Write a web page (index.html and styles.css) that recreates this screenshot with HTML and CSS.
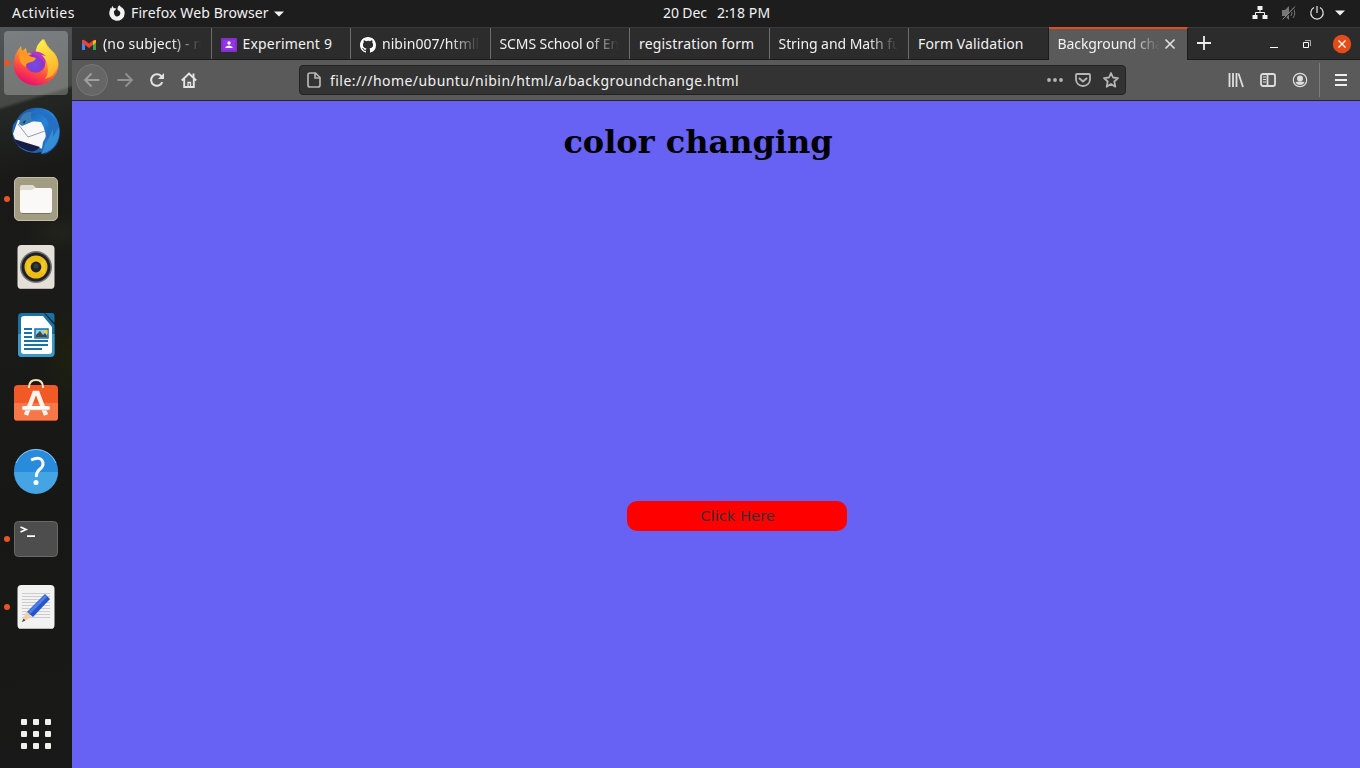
FILE: index.html
```html
<!DOCTYPE html>
<html lang="en">
<head>
<meta charset="utf-8">
<title>Background change</title>
<link rel="stylesheet" href="styles.css">
</head>
<body>
<header class="topbar">
  <div class="top-left">
    <span class="activities">Activities</span>
    <svg class="app-glyph" width="16" height="16" viewBox="0 0 16 16"><path d="M3.300.8 4.600 3 7.300 3.400 6 5.400 4.900 6.100 5.100 8.300A3.100 3.100 0 1 0 10.300 6L8.600 4.900Q8 2 10.300.3L12 2.100Q15.800 4.100 15.700 8.200A7.700 7.700 0 1 1 1.200 4.500L1.500 2.800 2.400 3.400Z" fill="#f2f2f2"/></svg>
    <span class="app-name">Firefox Web Browser</span>
    <svg class="caret" width="10" height="6" viewBox="0 0 10 6"><path d="M0 .5h10L5 5.5z" fill="#f2f2f2"/></svg>
  </div>
  <div class="clock"><span class="date">20 Dec</span><span>2:18 PM</span></div>
  <div class="status">
    <svg width="16" height="16" viewBox="0 0 16 16" fill="#f2f2f2"><path d="M5.500 1h5v4h-5zM.5 10h5v4h-5zM10.500 10h5v4h-5z"/><path d="M8 5v2.500M3.500 10V7.500h9V10" fill="none" stroke="#f2f2f2"/></svg>
    <svg width="16" height="16" viewBox="0 0 16 16" fill="none" stroke="#777"><path d="M1 5h3l4-4v14l-4-4H1z" fill="#777" stroke="none"/><path d="M10 5q2 3 0 6M12 3q3.500 5 0 10"/><path d="M2.500 14.800 15 1.800" stroke="#1d1d1d"/><path d="M1.500 14.500 14 1.500" stroke="#8a8a8a"/></svg>
    <svg width="16" height="16" viewBox="0 0 16 16" fill="none" stroke="#e8e8e8" stroke-width="1.200"><path d="M5 2.500A6.200 6.200 0 1 0 11 2.500M8 1v7"/></svg>
    <svg class="caret" width="10" height="6" viewBox="0 0 10 6"><path d="M0 .5h10L5 5.500z" fill="#f2f2f2"/></svg>
  </div>
</header>
<div class="desktop">
  <nav class="dock">
    <div class="dock-item running focused">
      <svg width="64" height="64" viewBox="0 0 64 64">
        <defs>
          <linearGradient id="fx" x1=".8" y1="0" x2=".35" y2="1"><stop offset="0" stop-color="#ffe636"/><stop offset=".4" stop-color="#ffa52b"/><stop offset=".7" stop-color="#ff503d"/><stop offset="1" stop-color="#e90b74"/></linearGradient>
          <linearGradient id="fy" x1="0" y1="0" x2=".3" y2="1"><stop offset="0" stop-color="#fff44f"/><stop offset="1" stop-color="#ffb12b"/></linearGradient>
          <radialGradient id="fp" cx=".45" cy=".6"><stop offset="0" stop-color="#6c50e8"/><stop offset="1" stop-color="#9331c8"/></radialGradient>
        </defs>
        <path d="M17 15 18 20 22 17 23 22 31 21 40 8Q43 15 47 19Q54 24 54.500 33A22.500 21.500 0 0 1 9.500 33Q9.500 24 17 15Z" fill="url(#fx)"/>
        <path d="M39 8Q42 16 47 19Q53 25 54 34Q51 46 41 48Q47 40 41 27L32 20Q32 14 39 8Z" fill="url(#fy)"/>
        <circle cx="31.500" cy="32" r="9.800" fill="url(#fp)"/>
        <path d="M25 22Q33 18 42 25L37 24Q43 29 41 33Q36 24 25 22Z" fill="#b833c6"/>
        <path d="M16 20Q22 25 32 27Q31 30 27 31Q21 32 22 36Q13 32 16 20Z" fill="#ff9a24"/>
      </svg>
    </div>
    <div class="dock-item">
      <svg width="64" height="64" viewBox="0 -1 64 64">
        <defs><linearGradient id="tb" x1="0" y1="0" x2="1" y2="1"><stop offset="0" stop-color="#174b96"/><stop offset=".5" stop-color="#2785dc"/><stop offset="1" stop-color="#153a80"/></linearGradient></defs>
        <path d="M16 15Q24 6 37 8Q54 11 56 31Q56 49 39 55L44 50Q28 57 15 47Q6 37 9 25Z" fill="url(#tb)"/>
        <path d="M14 20 37 22Q43 31 42 46L39 49 12 41 9 34Z" fill="#f8f8fa"/>
        <path d="M14 24 24 37 41 31" fill="none" stroke="#949ca7"/>
        <path d="M15 24Q17 11 28 12Q25 19 30 21L18 26Z" fill="#3a7db4"/><path d="M27 13Q43 12 45 26Q43 36 39 42L37 54Q57 48 55 29Q51 13 36 10Q30 9 27 13Z" fill="#2470c4"/>
        <path d="M38 54 43 37 42 44 49 29 49 37 55 27Q57 48 38 54Z" fill="#348dd5"/><path d="m19 22 3-2-2 4z" fill="#172333"/><path d="M10 39 36 47Q30 54 22 50Q13 47 10 39Z" fill="#171d44"/>
      </svg>
    </div>
    <div class="dock-item running">
      <svg width="64" height="64" viewBox="0 0 64 64"><rect x="10.500" y="10.500" width="43" height="43" rx="4.500" fill="#a29c83" stroke="#c3bea8"/><path d="M16 29V20q0-2 2-2h11l3 3h13q3 0 3 3v8H16z" fill="#dfdccf"/><path d="M16 24q0-1 2-1h10l3-2h15q2 0 2 2v20q0 3-3 3H19q-3 0-3-3z" fill="#faf9f7"/><path d="M18 46.500h28" stroke="#77715f"/></svg>
    </div>
    <div class="dock-item">
      <svg width="64" height="64" viewBox="0 0 64 64"><rect x="13.500" y="10" width="37" height="44" rx="4" fill="#e4e0d8"/><path d="M16 53.500h32" stroke="#bbb7af"/><circle cx="32" cy="32" r="16" fill="#777"/><circle cx="32" cy="32" r="14.500" fill="#20202b"/><circle cx="32" cy="32" r="11.500" fill="#edbd16"/><path d="m32 32-9-7v14zM32 32l9-7v14z" fill="#ffe04a" opacity=".35"/><circle cx="32" cy="32" r="5.400" fill="#20242a"/><circle cx="32" cy="31" r="2.500" fill="#353c44"/></svg>
    </div>
    <div class="dock-item">
      <svg width="64" height="64" viewBox="0 0 64 64"><path d="M18 10h22l10.500 12v28q0 4-4 4h-29q-3.500 0-3.500-4V14q0-4 4-4z" fill="#1872a5"/><path d="M14 31h36.500v19q0 4-4 4h-29q-3.500 0-3.500-4z" fill="#3999c7"/><path d="M41 10h7q2.500 0 2.500 3v7z" fill="#1872a5"/><path d="M20 13h19l9 11v24q0 3-3 3H20q-3 0-3-3V16q0-3 3-3z" fill="#fff"/><path d="M20 26h8M20 30h8M20 34h8M20 38h24M20 42h24M20 46h18" stroke="#1972a5" stroke-width="2"/><path d="M31 26h13v9H31z" fill="#8bd0ef" stroke="#1972a5" stroke-width="1.500"/><path d="M40 27h3.500v4q-3 0-3.500-4z" fill="#ffd020"/><path d="m32 34v-2l4-4 3 4 2-2 2 3v1z" fill="#444"/></svg>
    </div>
    <div class="dock-item">
      <svg width="64" height="64" viewBox="0 0 64 64"><rect x="10" y="14" width="44" height="36" rx="4" fill="#f15a27"/><path d="M10 32h44v14q0 4-4 4H14q-4 0-4-4z" fill="#f67849"/><path d="M12 49.500h40" stroke="#c84b23"/><path d="M25 17V15.500Q25.500 9 32 9t7 6.500V17" fill="none" stroke="#f3e5bb" stroke-width="2"/><path d="M22 44 30.500 22h3L42 44" fill="none" stroke="#fff4ed" stroke-width="4.500"/><path d="M20 37h24" stroke="#fff" stroke-width="4" stroke-linecap="round"/><path d="M20 39h24" stroke="#d9b2a0" stroke-width=".8"/></svg>
    </div>
    <div class="dock-item">
      <svg width="64" height="64" viewBox="0 1 64 64"><circle cx="32" cy="33" r="22" fill="#298bdc"/><path d="M10 34h44A22 22 0 0 1 10 34z" fill="#45a4e3"/><path d="M12 25A21.500 21.500 0 0 1 52 25" fill="none" stroke="#8dc4ed"/><path d="M27 22Q37 17.500 39 24.500Q39.500 28.500 35.500 31.500Q32 34.500 32.500 39" fill="none" stroke="#fff" stroke-width="3"/><circle cx="32" cy="44.500" r="2.500" fill="#fff"/></svg>
    </div>
    <div class="dock-item running">
      <svg width="64" height="64" viewBox="0 0 64 64"><rect x="10.500" y="14.500" width="43" height="35" rx="4" fill="#4d4d4d" stroke="#6a6a6a"/><path d="m16.500 20 5.500 2.500-5.500 2.500M23 29.200h8" fill="none" stroke="#fff" stroke-width="1.700"/></svg>
    </div>
    <div class="dock-item running">
      <svg width="64" height="64" viewBox="0 0 64 64"><rect x="13.500" y="10" width="37" height="44" rx="4" fill="#f2f2f2"/><path d="M15 53.500h34" stroke="#bbb"/><path d="M18 18.500h28M18 21.500h28M18 24.500h28M18 27.500h28M18 30.500h28M18 33.500h28M18 36.500h28M18 39.500h28M18 42.500h28" stroke="#ccc"/><path d="m18 47 4-10 6 5z" fill="#f5cda5"/><path d="m18 47 1.500-3.500 2 2z" fill="#444"/><path d="m23 37 18-18 5 5-17 18z" fill="#2854c8"/><path d="m24 37 17-17 2 2-17 17z" fill="#4980ea"/></svg>
    </div>
    <div class="apps">
      <svg width="32" height="32" viewBox="0 0 32 32" fill="#f0f0ee"><rect x="1" y="1" width="6" height="6" rx="1"/><rect x="13" y="1" width="6" height="6" rx="1"/><rect x="25" y="1" width="6" height="6" rx="1"/><rect x="1" y="13" width="6" height="6" rx="1"/><rect x="13" y="13" width="6" height="6" rx="1"/><rect x="25" y="13" width="6" height="6" rx="1"/><rect x="1" y="25" width="6" height="6" rx="1"/><rect x="13" y="25" width="6" height="6" rx="1"/><rect x="25" y="25" width="6" height="6" rx="1"/></svg>
    </div>
  </nav>
  <div class="browser">
    <div class="tabs">
      <div class="tab"><svg width="16" height="16" viewBox="0 0 16 16"><path d="M1 3v10h3V5z" fill="#4285f4"/><path d="M12 5v8h3V3z" fill="#34a853"/><path d="M12 5v3l3-2.500V3z" fill="#fbbc04"/><path d="M1 3.500v2L8 11l7-5.500v-2Q13.500 2 12 3.500L8 6.500l-4-3Q2 2 1 3.500z" fill="#ea4335"/><path d="m12 4 3-1v2.500L12 8z" fill="#fbbc04"/></svg><span class="label fade mail">(no subject) - n</span></div>
      <div class="tab"><svg width="16" height="16" viewBox="0 0 16 16"><rect y="1" width="16" height="14" rx="1" fill="#8430ce"/><rect x="2" y="3" width="12" height="10" fill="#9334e6"/><circle cx="8" cy="6" r="1.700" fill="#fff"/><path d="M4.500 11V10Q8 7 11.500 10v1z" fill="#fff"/></svg><span class="label exp">Experiment 9</span></div>
      <div class="tab"><svg width="16" height="16" viewBox="0 0 16 16"><path fill="#fff" d="M8 0C3.580 0 0 3.580 0 8c0 3.540 2.290 6.530 5.470 7.590.4.070.55-.17.55-.38 0-.19-.01-.82-.01-1.490-2.010.37-2.530-.49-2.690-.94-.09-.23-.48-.94-.82-1.130-.28-.15-.68-.52-.01-.53.63-.01 1.080.58 1.230.82.72 1.210 1.870.87 2.330.66.070-.52.28-.87.51-1.070-1.780-.2-3.640-.89-3.640-3.950 0-.87.31-1.590.82-2.150-.08-.2-.36-1.020.08-2.120 0 0 .67-.21 2.200.82A7.700 7.700 0 0 1 8 3.860c.68 0 1.360.09 2 .27 1.530-1.040 2.200-.82 2.200-.82.44 1.100.16 1.920.08 2.120.51.56.82 1.270.82 2.150 0 3.070-1.870 3.750-3.650 3.950.29.25.54.73.54 1.480 0 1.070-.01 1.930-.01 2.200 0 .21.15.46.55.38A8 8 0 0 0 16 8c0-4.420-3.580-8-8-8z"/></svg><span class="label fade">nibin007/htmll</span></div>
      <div class="tab"><span class="label fade scms">SCMS School of En</span></div>
      <div class="tab"><span class="label reg">registration form</span></div>
      <div class="tab"><span class="label fade math">String and Math fu</span></div>
      <div class="tab"><span class="label form">Form Validation</span></div>
      <div class="tab active"><span class="label fade current">Background cha</span><svg class="tab-close" width="12" height="12" viewBox="0 0 12 12"><path d="m1.500 1.500 9 9m0-9-9 9" stroke="#e2e2e2" stroke-width="1.600"/></svg></div>
      <svg class="new-tab" width="16" height="16" viewBox="0 0 16 16"><path d="M8 1v14M1 8h14" stroke="#eee" stroke-width="1.800"/></svg>
      <div class="window-buttons">
        <svg width="10" height="10" viewBox="0 0 10 10"><path d="M1 7.500h8" stroke="#fff"/></svg>
        <svg width="10" height="10" viewBox="0 0 10 10" fill="none"><path d="M1.500 3.500h5v5h-5z" stroke="#fff"/><path d="M3 1.500h5.500V7" stroke="#aaa"/></svg>
        <svg width="20" height="20" viewBox="0 0 20 20"><circle cx="10" cy="10" r="9.200" fill="#e44d1a"/><path d="m6.500 6.500 7 7m0-7-7 7" stroke="#fff" stroke-width="1.300"/></svg>
      </div>
    </div>
    <div class="toolbar">
      <div class="nav">
        <span class="back"><svg width="16" height="16" viewBox="0 0 16 16" fill="none" stroke="#a0a0a0" stroke-width="1.800"><path d="M15.500 8H1M7.500 1.500 1 8l6.500 6.500"/></svg></span>
        <svg width="16" height="16" viewBox="0 0 16 16" fill="none" stroke="#929292" stroke-width="1.800"><path d="M.5 8H15M8.500 1.500 15 8l-6.500 6.500"/></svg>
        <svg width="16" height="16" viewBox="0 0 16 16" fill="none" stroke="#e2e2e2" stroke-width="2"><path d="M13.300 10.200A5.800 5.800 0 1 1 12.700 4.700"/><path d="M15 1v6H9z" fill="#e2e2e2" stroke="none"/></svg>
        <svg width="16" height="16" viewBox="0 0 16 16" fill="none" stroke="#e5e5e5" stroke-width="1.900"><path d="M.8 8.500 8 1.500l7.200 7M3.200 7v8h9.600V7"/><path d="M7 15v-4.500h2.500V15" stroke-width="1.300"/><path d="M12.500 1.500v4"/></svg>
      </div>
      <div class="urlbar">
        <svg class="page-icon" width="16" height="16" viewBox="0 0 16 16" fill="none" stroke="#b5b5b5" stroke-width="1.700"><path d="M4 1h5.500L14 5.500V13q0 2-2 2H4q-2 0-2-2V3q0-2 2-2zM9 1v5h5"/></svg>
        <span class="url">file:///home/ubuntu/nibin/html/a/backgroundchange.html</span>
        <svg width="16" height="16" viewBox="0 0 16 16" fill="#b5b5b5"><circle cx="2" cy="8" r="1.900"/><circle cx="8" cy="8" r="1.900"/><circle cx="14" cy="8" r="1.900"/></svg>
        <svg width="16" height="16" viewBox="0 0 16 16" fill="none" stroke="#b5b5b5" stroke-width="1.800"><path d="M2 2h12q1 0 1 1v4.500a7 6.500 0 0 1-14 0V3q0-1 1-1z"/><path d="m4.500 6.500 3.500 3 3.500-3" stroke-width="2" stroke-linecap="round"/></svg>
        <svg width="16" height="16" viewBox="0 0 16 16" fill="none" stroke="#b5b5b5" stroke-width="1.800" stroke-linejoin="round"><path d="m8 1 2 4.500 5 .6-3.700 3.400 1 5.200L8 12l-4.300 2.700 1-5.200L1 6.100l5-.6z"/></svg>
      </div>
      <div class="tools">
        <svg width="16" height="16" viewBox="0 0 16 16" fill="none" stroke="#dedede" stroke-width="1.800"><path d="M1.500 1v14M5 1v14M8.500 1v14M10.500 1.500 15 15"/></svg>
        <svg width="16" height="16" viewBox="0 0 16 16" fill="none" stroke="#dedede" stroke-width="1.800"><rect x="1" y="2" width="14" height="12" rx="2"/><path d="M7.500 2v12"/><path d="M3 5h3M3 7.500h3M3 10h3" stroke-width="1"/></svg>
        <svg width="16" height="16" viewBox="0 0 16 16"><circle cx="8" cy="8" r="6.700" fill="none" stroke="#dedede" stroke-width="1.200"/><circle cx="8" cy="6.500" r="3" fill="#dedede"/><path d="M3.500 10Q8 9 12.500 10Q11.500 13 8 13T3.500 10z" fill="#dedede"/></svg>
        <span class="divider"></span>
        <svg class="menu" width="14" height="16" viewBox="0 0 14 16"><path d="M1 3h12M1 8h12M1 13h12" stroke="#eee" stroke-width="2"/></svg>
      </div>
    </div>
    <main class="page">
      <h1>color changing</h1>
      <button class="change">Click Here</button>
    </main>
  </div>
</div>
</body>
</html>
```
FILE: styles.css
```css
* { box-sizing: border-box; }
body { margin: 0; width: 1360px; height: 768px; overflow: hidden; display: flex; flex-direction: column; font: 14px/20px "Noto Sans", sans-serif; color: #f2f2f2; background: #1d1d1d; }
svg { display: block; flex: none; }
.topbar { height: 27px; flex: none; display: grid; grid-template-columns: 1fr auto 1fr; align-items: center; background: #1d1d1d; }
.topbar span { padding-bottom: 2px; }
.top-left { display: flex; align-items: center; padding-left: 12px; }
.app-glyph, .status { margin-top: -1px; }
.activities { width: 97px; letter-spacing: .45px; }
.app-name { width: 138px; margin-left: 6px; white-space: nowrap; letter-spacing: .12px; }
.caret { margin-left: 5px; }
.clock { display: flex; gap: 10px; padding-left: 73px; width: 180px; white-space: nowrap; letter-spacing: .1px; }
.date { width: 44px; letter-spacing: -.1px; }
.status { display: flex; align-items: center; justify-content: flex-end; gap: 12px; padding-right: 15px; }
.status .caret { margin-left: -1px; }
.status svg:first-child { margin-right: 1px; }
.status svg:nth-child(-n+3) { transform: translateX(1px); }
.desktop { flex: 1; display: flex; min-height: 0; }
.dock { width: 72px; padding: 4px; display: flex; flex-direction: column; gap: 4px; background: radial-gradient(ellipse 40px 22px at 62px 205px, #21231a, transparent), radial-gradient(ellipse 30px 60px at 70px 330px, #1e200f, transparent), linear-gradient(163deg, #50555a 0, #494c4c 48px, #454843 76px, #242724 80px, #191918 150px, #1a1a18 280px, #171815 460px, #191919 100%); }
.dock-item { position: relative; height: 64px; flex: none; }
.focused { background: rgba(255,255,255,.25); border-radius: 4px; }
.running::before { content: ""; position: absolute; left: 0; top: 29px; width: 6px; height: 6px; border-radius: 50%; background: #e95420; }
.apps { margin: auto auto 14px; }
.browser { flex: 1; display: flex; flex-direction: column; min-width: 0; }
.tabs { height: 33px; flex: none; display: flex; align-items: center; background: #2c2c2c; border-top: 1px solid #3a3a3a; border-bottom: 1px solid #1b1b1b; }
.tab { width: 139.5px; height: 31px; flex: none; display: flex; align-items: center; gap: 6px; padding: 2px 10px 0 9px; border-right: 1px solid #6d6d6d; }
.tab:nth-child(7) { border-right-color: #1b1b1b; }
.tab.active { height: 33px; width: 139px; margin: -1px 0; background: #5a5a5a; border-top: 2px solid #e44d1a; border-right-color: #1b1b1b; padding: 1px 11px 0 9px; gap: 4px; }
.tab-close { margin-top: -2px; }
.label { flex: 1; min-width: 0; white-space: nowrap; padding-bottom: 2px; letter-spacing: .05px; }
.mail { letter-spacing: .15px; }
.exp { letter-spacing: .18px; }
.reg { letter-spacing: .18px; }
.form { letter-spacing: .12px; }
.scms { letter-spacing: -.1px; }
.math { letter-spacing: -.06px; }
.current { letter-spacing: -.08px; }
.fade { -webkit-mask-image: linear-gradient(to left, transparent, #000 30px); mask-image: linear-gradient(to left, transparent, #000 30px); }
.new-tab { margin: -1px 0 0 8px; }
.window-buttons { margin-left: auto; padding-right: 8px; display: flex; align-items: center; gap: 23px; }
.window-buttons svg:first-child { margin: 2px -1px 0 0; transform: translateX(1px); }
.window-buttons svg:nth-child(2) { margin: 0 0 0 1px; transform: translateX(1px); }
.window-buttons svg:last-child { margin-left: -2px; }
.toolbar { height: 41px; flex: none; display: flex; align-items: center; background: #5a5a5a; border-bottom: 1px solid #262626; }
.nav { width: 227px; display: flex; align-items: center; gap: 16px; padding-left: 4px; }
.back { width: 32px; height: 32px; display: grid; place-items: center; border-radius: 50%; background: #666; border: 1px solid #777; margin-right: -7px; }
.urlbar { width: 827px; height: 30px; display: flex; align-items: center; gap: 12px; padding: 0 6px; background: #333; border: 1px solid #222; border-radius: 4px; }
.page-icon { margin-right: -4px; }
.url { flex: 1; white-space: nowrap; padding-top: 1px; letter-spacing: .45px; }
.tools { flex: 1; display: flex; align-items: center; gap: 16px; padding: 0 12px 0 102px; }
.divider { width: 1px; height: 34px; background: #7d7d7d; margin: 0 -2px 0 -5px; }
.page { flex: 1; background: #6762f4; color: #000; }
h1 { margin: 22px 36px 0 0; font: bold 32px/38px "DejaVu Serif", serif; text-align: center; }
.change { display: block; width: 220px; height: 30px; margin: 340px 0 0 555px; padding: 0 0 1px 1px; border: 0; border-radius: 10px; background: #f00; color: #333; font: 14.67px/29px "DejaVu Sans", sans-serif; }
```
